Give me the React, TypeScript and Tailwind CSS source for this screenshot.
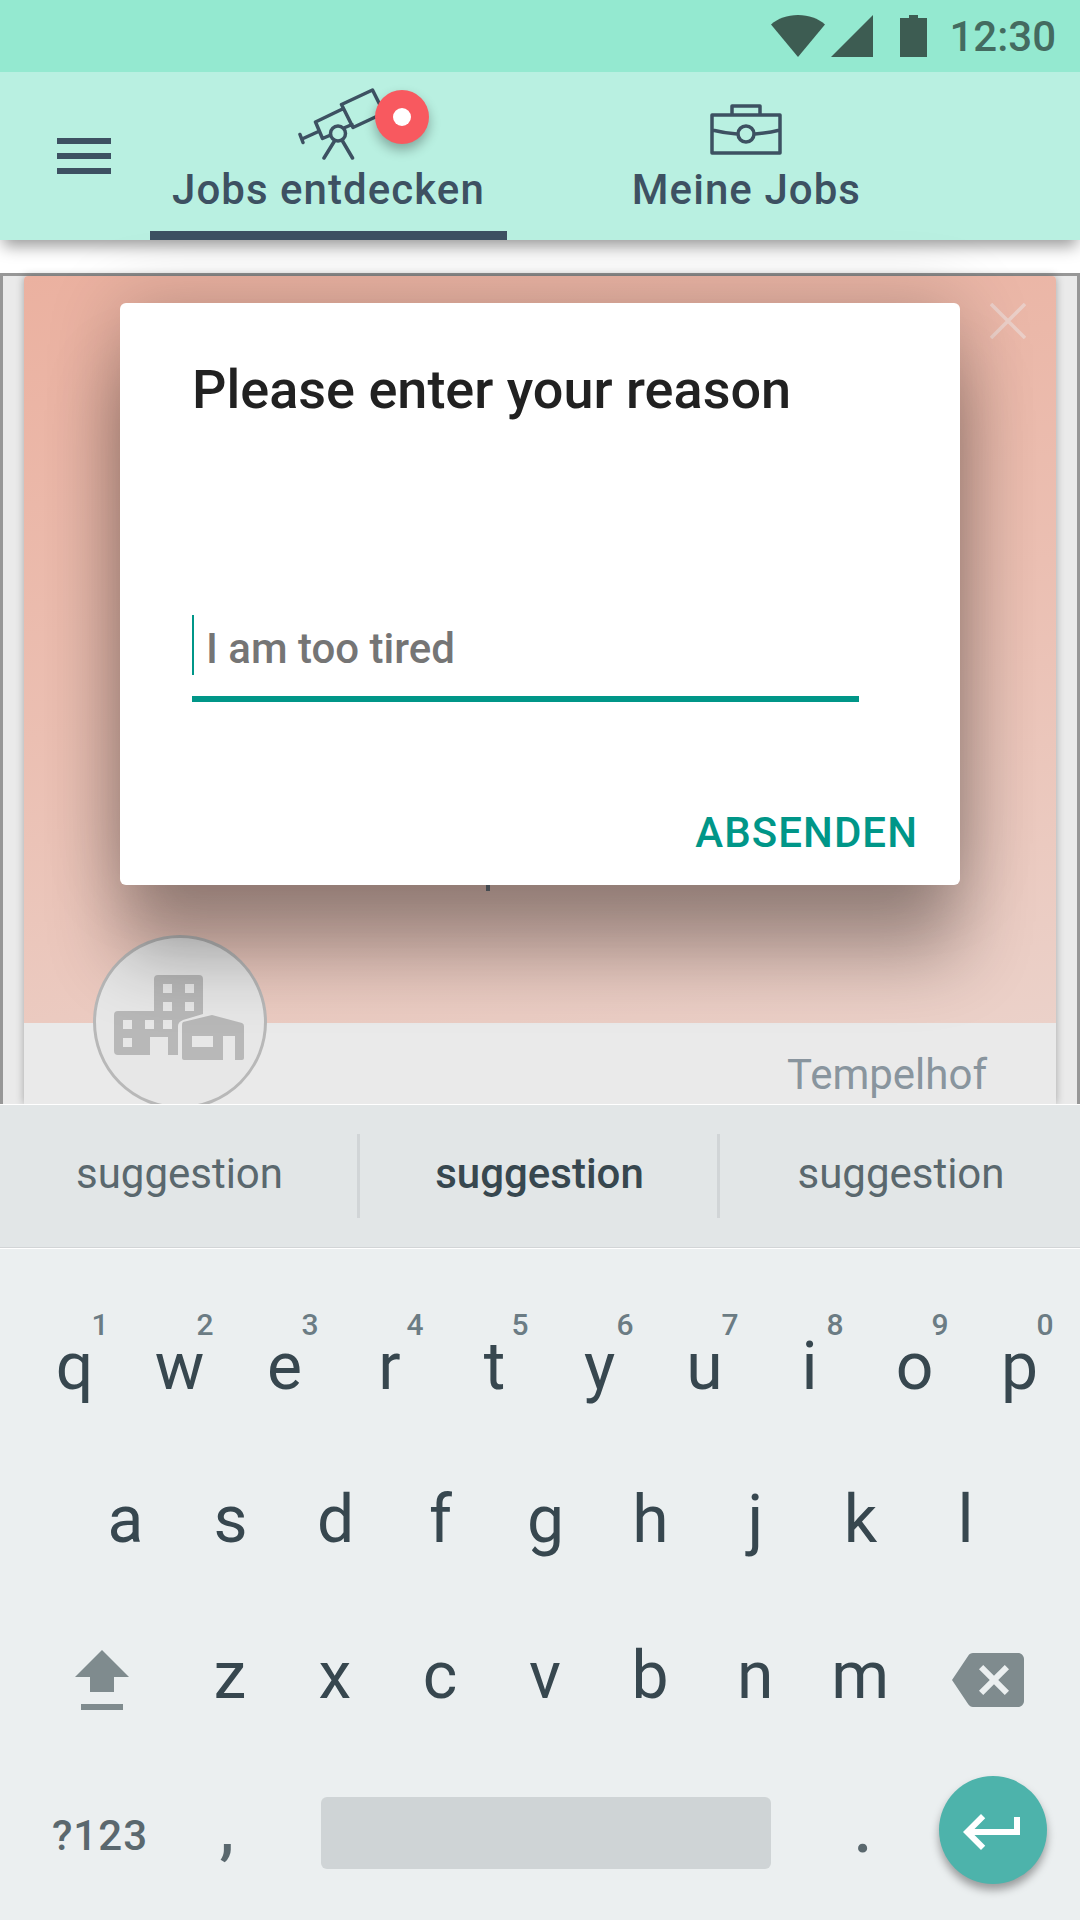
import type { ReactNode } from "react";

const TOP_ROW = ["q", "w", "e", "r", "t", "y", "u", "i", "o", "p"];
const DIGITS = ["1", "2", "3", "4", "5", "6", "7", "8", "9", "0"];
const HOME_ROW = ["a", "s", "d", "f", "g", "h", "j", "k", "l"];
const BOTTOM_ROW = ["z", "x", "c", "v", "b", "n", "m"];

function StatusBar() {
  return (
    <div className="relative z-10 flex h-[72px] items-center justify-end bg-[#94e9d0] pr-6 text-[#446b60]">
      <svg width="54" height="42" viewBox="0 0 54 42" className="mr-1.5" fill="#3d5c52" aria-hidden="true">
        <path d="M0 9.5C7 3.5 16 0 27 0s20 3.500 27 9.500L27 42z" />
      </svg>
      <svg width="42" height="42" viewBox="0 0 42 42" className="mr-[27px]" fill="#3d5c52" aria-hidden="true">
        <path d="M42 0v42H0z" />
      </svg>
      <svg width="27" height="42" viewBox="0 0 27 42" className="mr-[22px]" fill="#3d5c52" aria-hidden="true">
        <path d="M9 0h9v3h9v39H0V3h9z" />
      </svg>
      <time className="pt-0.5 text-[42px] leading-[48px] font-medium">12:30</time>
    </div>
  );
}

function TelescopeIcon() {
  return (
    <svg width="90" height="78" viewBox="0 0 90 78" className="shrink-0" fill="none" stroke="#3d5162" strokeWidth="3.500" strokeLinejoin="round" strokeLinecap="round" aria-hidden="true">
      <path d="M45.500 16.500 76.500 2 88 25 57 39.500zM47.500 20.500l-28 13.500 7 16.500 7-3M49 39.500l7-3M22.500 43.500 6 51M4 46.500l3 8M38.500 53 28 70M46.500 53l10 17" />
      <circle cx="42" cy="45.500" r="7.500" />
    </svg>
  );
}

function BriefcaseIcon() {
  return (
    <svg width="72" height="54" viewBox="0 0 72 54" fill="none" stroke="#3d5162" strokeWidth="3.500" strokeLinejoin="round" aria-hidden="true">
      <path d="M2 12h68v38H2zM22 12V3h28v9M2 27q12 3 25 4M70 27q-12 3-25 4" />
      <circle cx="36" cy="31" r="8" />
    </svg>
  );
}

function Header() {
  return (
    <header className="relative flex h-[168px] bg-[#b9f0e1] text-[#3d5162] shadow-[0_9px_15px_-3px_rgba(0,0,0,0.4)]">
      <button type="button" aria-label="Menü" className="flex w-[150px] flex-col gap-[9px] pt-[66px] pl-[57px]">
        <span className="h-1.5 w-[54px] bg-[#3d5162]" />
        <span className="h-1.5 w-[54px] bg-[#3d5162]" />
        <span className="h-1.5 w-[54px] bg-[#3d5162]" />
      </button>
      <nav className="flex gap-[103px]">
        <a href="#entdecken" aria-current="page" className="flex flex-col items-center border-b-[9px] border-[#3d5162] px-[22px] pt-4">
          <span className="relative flex h-[78px] w-[64px]">
            <TelescopeIcon />
            <span className="absolute top-0.5 left-[79px] flex size-[54px] items-center justify-center rounded-full bg-[#f8595f] shadow-[0_6px_12px_rgba(0,0,0,0.3)]">
              <span className="size-[18px] rounded-full bg-white" />
            </span>
          </span>
          <span className="text-[42px] leading-[48px] font-medium tracking-wide">Jobs entdecken</span>
        </a>
        <a href="#meine" className="flex flex-col items-center px-[22px] pt-[31px]">
          <span className="flex h-[63px]">
            <BriefcaseIcon />
          </span>
          <span className="text-[42px] leading-[48px] font-medium tracking-wide">Meine Jobs</span>
        </a>
      </nav>
    </header>
  );
}

function BuildingsIcon() {
  return (
    <svg width="130" height="86" viewBox="0 0 130 86" fill="#b8b8b8" aria-hidden="true">
      <path fillRule="evenodd" d="M44 0h41a4 4 0 0 1 4 4v35l-20 6q-5 2-5 6v29H54V62H36v18H4a4 4 0 0 1-4-4V40a4 4 0 0 1 4-4h36V4a4 4 0 0 1 4-4zM49 9v9h9V9zM71 9v9h9V9zM49 27v9h9v-9zM71 27v9h9v-9zM9 45v9h9v-9zM31 45v9h9v-9zM49 45v9h9v-9zM9 63v9h9v-9z" />
      <path fillRule="evenodd" d="M69 47l29-7 30 8q2 1 2 3v32a2 2 0 0 1-2 2h-7V61h-12v24H70a2 2 0 0 1-2-2V50q0-2 1-3zM78 61v11h21V61z" />
    </svg>
  );
}

function ReasonDialog() {
  return (
    <form
      role="dialog"
      aria-labelledby="reason-title"
      onSubmit={(event) => event.preventDefault()}
      className="absolute inset-x-[117px] top-[27px] flex h-[582px] flex-col rounded-md bg-white pl-[72px] shadow-[0_0_72px_rgba(0,0,0,0.22),0_72px_72px_rgba(0,0,0,0.3)]"
    >
      <h1 id="reason-title" className="pt-[55px] text-[54px] leading-[64px] font-medium text-[#212121]">
        Please enter your reason
      </h1>
      <div className="mt-[193px] mr-[101px] flex h-[87px] items-start border-b-[6px] border-[#009688]">
        <span className="h-[60px] w-0.5 bg-[#009688]" />
        <input
          type="text"
          aria-labelledby="reason-title"
          placeholder="I am too tired"
          className="h-[66px] min-w-0 flex-1 bg-transparent pl-3 text-[42px] font-medium text-[#757575] outline-none placeholder:text-[#757575]"
        />
      </div>
      <button type="submit" className="mt-auto mr-[42px] mb-[28px] self-end text-[42px] leading-[48px] font-medium tracking-wide text-[#009688]">
        ABSENDEN
      </button>
    </form>
  );
}

function JobCard() {
  return (
    <main className="relative mt-[33px] h-[831px] border-x-[3px] border-t-[3px] border-[#979797] bg-[#eaeaea] px-[21px]">
      <div className="flex h-full flex-col rounded-t-sm shadow-[0_0_9px_rgba(0,0,0,0.3)]">
        <div className="relative h-[747px] rounded-t-sm bg-linear-170 from-[#ebb1a0] via-[#ebbfb2] to-[#ebd1c9]">
          <button type="button" aria-label="Schließen" className="absolute top-[27px] right-[30px]">
            <svg width="36" height="36" viewBox="0 0 36 36" stroke="#ebcfc8" strokeWidth="3.500" aria-hidden="true">
              <path d="M1 1l34 34M35 1 1 35" />
            </svg>
          </button>
          <span className="absolute top-[600px] left-[462px] h-[15px] w-1 bg-[#6d767e]" />
        </div>
        <div className="relative flex flex-1 items-center justify-end bg-[#eaeaea] pr-[69px] pt-[22px]">
          <div className="absolute -top-[88px] left-[69px] flex size-[174px] items-center justify-center rounded-full border-[3px] border-[#b8b8b8] bg-[#e7e7e7] pr-0.5 pb-2">
            <BuildingsIcon />
          </div>
          <p className="text-[42px] leading-[48px] text-[#89959e]">Tempelhof</p>
        </div>
      </div>
      <ReasonDialog />
    </main>
  );
}

function Key({ label, hint }: { label: string; hint?: string }) {
  return (
    <button type="button" className="relative flex h-[78px] flex-1 justify-center text-[66px] leading-[78px] text-[#37474f]">
      {label}
      {hint && (
        <span className="absolute -top-[21px] left-1/2 ml-[17px] text-[30px] leading-[36px] font-medium text-[#6b7c84]">
          {hint}
        </span>
      )}
    </button>
  );
}

function SideKey({ label, children }: { label: string; children: ReactNode }) {
  return (
    <button type="button" aria-label={label} className="flex h-[86px] flex-[1.44] items-center justify-center">
      {children}
    </button>
  );
}

function Keyboard() {
  return (
    <section aria-label="Tastatur" className="relative flex flex-col bg-[#ebeff0]">
      <div className="grid h-[144px] grid-cols-3 items-center border-y border-t-white border-b-[#d2d5d7] bg-[#e2e6e7] text-[42px] leading-[48px] text-[#5a686e]">
        <button type="button" className="h-[84px] border-r-[3px] border-[#d1d5d7] pb-1 pl-0.5">suggestion</button>
        <button type="button" className="h-[84px] border-r-[3px] border-[#d1d5d7] pb-1 pl-0.5 font-medium text-[#37474f]">suggestion</button>
        <button type="button" className="h-[84px] pb-1 pl-0.5">suggestion</button>
      </div>
      <div className="flex h-[672px] flex-col border-t border-white pt-[79px] pr-2 pl-[22px]">
        <div className="flex">
          {TOP_ROW.map((k, i) => <Key key={k} label={k} hint={DIGITS[i]} />)}
        </div>
        <div className="mt-[75px] flex pr-[54px] pl-[51px]">
          {HOME_ROW.map((k) => <Key key={k} label={k} />)}
        </div>
        <div className="mt-[78px] flex pr-2 pl-1">
          <SideKey label="Umschalt">
            <svg width="54" height="60" viewBox="0 0 54 60" fill="#7f8b8e" aria-hidden="true">
              <path d="M27 0l27 27H39v15H15V27H0zM6 54h42v6H6z" />
            </svg>
          </SideKey>
          {BOTTOM_ROW.map((k) => <Key key={k} label={k} />)}
          <SideKey label="Löschen">
            <svg width="72" height="72" viewBox="0 0 24 24" fill="#7f8b8e" aria-hidden="true">
              <path d="M22 3H7c-.69 0-1.230.350-1.590.880L0 12l5.410 8.110c.360.530.900.890 1.590.890h15c1.100 0 2-.900 2-2V5c0-1.100-.900-2-2-2zm-3 12.590L17.590 17 14 13.410 10.410 17 9 15.590 12.590 12 9 8.410 10.410 7 14 10.590 17.590 7 19 8.410 15.410 12 19 15.590z" />
            </svg>
          </SideKey>
        </div>
        <div className="mt-[53px] flex h-[108px] items-center pr-[25px] text-[#5a686e]">
          <button type="button" className="w-[156px] pt-3 text-[42px] leading-[48px] font-medium tracking-wide">?123</button>
          <button type="button" className="w-[98px] text-[66px] leading-[78px] font-medium">,</button>
          <button type="button" aria-label="Leertaste" className="mt-1.5 mr-4 ml-[45px] h-[72px] flex-1 rounded-md bg-[#cfd4d6]" />
          <button type="button" className="w-[152px] text-[66px] leading-[78px] font-medium">.</button>
          <button type="button" aria-label="Eingabe" className="flex size-[108px] items-center justify-center rounded-full bg-[#4db3ab] pt-1 shadow-[0_6px_9px_rgba(0,0,0,0.35)]">
            <svg width="72" height="72" viewBox="0 0 24 24" fill="#fff" aria-hidden="true">
              <path d="M19 7v4H5.830l3.580-3.590L8 6l-6 6 6 6 1.410-1.410L5.830 13H21V7z" />
            </svg>
          </button>
        </div>
      </div>
    </section>
  );
}

export default function App() {
  return (
    <div className="min-h-screen overflow-hidden bg-white font-['Roboto',sans-serif]">
      <StatusBar />
      <Header />
      <JobCard />
      <Keyboard />
    </div>
  );
}
